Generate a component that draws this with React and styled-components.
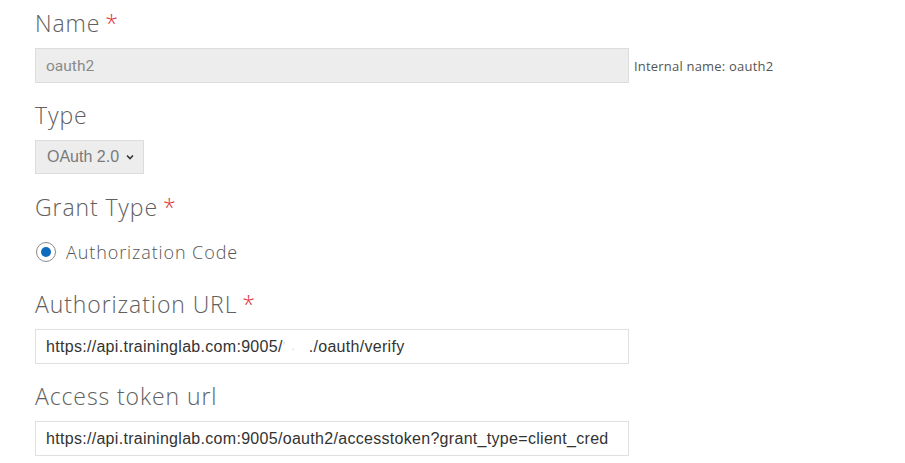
import React from "react"
import styled, { createGlobalStyle } from "styled-components"

const GlobalStyle = createGlobalStyle`
    body {
        margin: 0;
        background: #fff;
        font-family: 'Open Sans', 'Liberation Sans', sans-serif;
    }
`

const Form = styled.div`
    display: flex;
    flex-direction: column;
    padding: 8px 0 0 35px;
`

const Field = styled.div`
    display: flex;
    flex-direction: column;
    margin-bottom: ${props => props.$gap || 17}px;
`

const Label = styled.div`
    font-family: 'Open Sans', sans-serif;
    font-weight: 300;
    font-size: 23px;
    letter-spacing: 0.9px;
    line-height: 30px;
    height: 30px;
    color: #606060;
    margin-bottom: 10px;
`

const Required = styled.span`
    color: #e2323c;
    margin-left: 5px;
`

const Row = styled.div`
    display: flex;
    align-items: center;
    column-gap: 5px;
`

const TextInput = styled.div`
    box-sizing: border-box;
    width: 594px;
    height: 35px;
    display: flex;
    align-items: center;
    padding: 0 10px;
    border: 1px solid ${props => props.$disabled ? '#dcdcdc' : '#e0e0e0'};
    background: ${props => props.$disabled ? '#ededed' : '#fff'};
    color: ${props => props.$disabled ? '#8a8a8a' : '#333'};
    font-family: ${props => props.$disabled ? "Roboto, 'Liberation Sans', sans-serif" : "'Liberation Sans', Arial, sans-serif"};
    font-size: ${props => props.$disabled ? 15.5 : 16}px;
    letter-spacing: ${props => props.$disabled ? 0 : 0.3}px;
    white-space: nowrap;
    overflow: hidden;
`

const Hint = styled.span`
    font-family: 'Open Sans', sans-serif;
    font-size: 13px;
    letter-spacing: 0.2px;
    color: #555;
`

const Select = styled.div`
    box-sizing: border-box;
    width: 109px;
    height: 34px;
    display: flex;
    align-items: center;
    justify-content: space-between;
    padding: 0 9px 0 11px;
    border: 1px solid #dcdcdc;
    background: #ededed;
    color: #7a7a7a;
    font-family: 'Liberation Sans', Arial, sans-serif;
    font-size: 16px;
`

const RadioRow = styled.label`
    display: flex;
    align-items: center;
    column-gap: 10px;
    height: 24px;
    margin-top: 8px;
    font-family: 'Open Sans', sans-serif;
    font-weight: 300;
    font-size: 18px;
    letter-spacing: 0.9px;
    color: #555;
`

const RadioCircle = styled.span`
    box-sizing: border-box;
    width: 20px;
    height: 20px;
    border-radius: 50%;
    border: 1px solid #8a8a8a;
    display: flex;
    align-items: center;
    justify-content: center;
    margin-left: 1px;

    &::after {
        content: '';
        width: 10px;
        height: 10px;
        border-radius: 50%;
        background: ${props => props.$checked ? '#0f6cbd' : 'transparent'};
    }
`

const Redacted = styled.span`
    display: inline-block;
    width: 26px;
    color: #c8c8c8;
    font-size: 10px;
`

function Chevron() {
    return (
        <svg width="8" height="6" viewBox="0 0 8 6">
            <path d="M1 1.5l3 3 3-3" fill="none" stroke="#333" strokeWidth="1.6" />
        </svg>
    )
}

export default function App() {
    return (
        <>
            <GlobalStyle />
            <Form>
                <Field>
                    <Label>Name<Required>*</Required></Label>
                    <Row>
                        <TextInput $disabled>oauth2</TextInput>
                        <Hint>Internal name: oauth2</Hint>
                    </Row>
                </Field>
                <Field $gap={18}>
                    <Label>Type</Label>
                    <Select>
                        <span>OAuth 2.0</span>
                        <Chevron />
                    </Select>
                </Field>
                <Field $gap={25}>
                    <Label>Grant Type<Required>*</Required></Label>
                    <RadioRow>
                        <RadioCircle $checked />
                        Authorization Code
                    </RadioRow>
                </Field>
                <Field>
                    <Label>Authorization URL<Required>*</Required></Label>
                    <TextInput>
                        https://api.traininglab.com:9005/<Redacted>ʼ &nbsp;.</Redacted>./oauth/verify
                    </TextInput>
                </Field>
                <Field>
                    <Label>Access token url</Label>
                    <TextInput>https://api.traininglab.com:9005/oauth2/accesstoken?grant_type=client_cred</TextInput>
                </Field>
            </Form>
        </>
    )
}
